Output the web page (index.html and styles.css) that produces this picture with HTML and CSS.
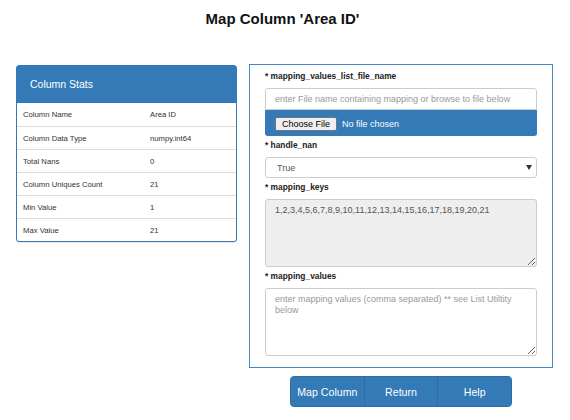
FILE: index.html
```html
<!DOCTYPE html>
<html>
<head>
<meta charset="utf-8">
<link rel="stylesheet" href="styles.css">
</head>
<body>
<h1 class="title">Map Column 'Area ID'</h1>
<div class="layout">
  <section class="stats">
    <div class="stats-head">Column Stats</div>
    <div class="stat-row"><span>Column Name</span><span>Area ID</span></div>
    <div class="stat-row"><span>Column Data Type</span><span>numpy.int64</span></div>
    <div class="stat-row"><span>Total Nans</span><span>0</span></div>
    <div class="stat-row"><span>Column Uniques Count</span><span>21</span></div>
    <div class="stat-row"><span>Min Value</span><span>1</span></div>
    <div class="stat-row"><span>Max Value</span><span>21</span></div>
  </section>
  <div class="right">
    <form class="form-panel">
      <label class="lbl">* mapping_values_list_file_name</label>
      <input class="text-input" type="text" placeholder="enter File name containing mapping or browse to file below">
      <div class="file-row"><span class="file-btn">Choose File</span><span class="file-none">No file chosen</span></div>
      <label class="lbl">* handle_nan</label>
      <div class="select"><span>True</span><svg class="caret" width="6" height="5" viewBox="0 0 6 5"><polygon points="0,0 6,0 3,5" fill="#333"/></svg></div>
      <label class="lbl">* mapping_keys</label>
      <textarea class="area area-ro" readonly>1,2,3,4,5,6,7,8,9,10,11,12,13,14,15,16,17,18,19,20,21</textarea>
      <label class="lbl">* mapping_values</label>
      <textarea class="area" placeholder="enter mapping values (comma separated) ** see List Utiltity below"></textarea>
    </form>
    <div class="actions">
      <button class="btn" type="button">Map Column</button>
      <button class="btn" type="button">Return</button>
      <button class="btn" type="button">Help</button>
    </div>
  </div>
</div>
</body>
</html>
```
FILE: styles.css
```css
* { box-sizing: border-box; }
body {
  margin: 0;
  background: #fff;
  font-family: "Liberation Sans", Arial, sans-serif;
  color: #333;
}
.title {
  margin: 0;
  padding: 10px 5px 0 0;
  font-size: 15px;
  line-height: 17px;
  font-weight: bold;
  color: #111;
  text-align: center;
}
.layout {
  display: flex;
  align-items: flex-start;
  gap: 12px;
  padding-left: 16px;
  margin-top: 37px;
}
.stats {
  width: 221px;
  margin-top: 1px;
  border: 1px solid #337ab7;
  border-radius: 3px;
  box-shadow: 0 1px 1px rgba(0,0,0,.1);
  background: #fff;
}
.stats-head {
  height: 37px;
  background: #337ab7;
  color: #fff;
  font-size: 10.5px;
  padding: 0 0 2px 13px;
  display: flex;
  align-items: center;
}
.stat-row {
  display: grid;
  grid-template-columns: 127px 1fr;
  align-items: center;
  height: 23px;
  padding-left: 6px;
  border-top: 1px solid #ddd;
  font-size: 7.7px;
  color: #333;
}
.stats-head + .stat-row { border-top: 0; }
.right {
  width: 304px;
  display: flex;
  flex-direction: column;
  align-items: center;
}
.form-panel {
  width: 100%;
  margin: 0;
  border: 1px solid #4a88c7;
  padding: 6px 15px 11px;
  display: flex;
  flex-direction: column;
}
.lbl {
  display: block;
  font-size: 8.4px;
  line-height: 11px;
  font-weight: bold;
  color: #222;
  margin: 0 0 6px;
}
.text-input {
  display: block;
  width: 100%;
  height: 22px;
  margin: 0;
  border: 1px solid #ccc;
  border-radius: 3px 3px 0 0;
  padding: 0 9px;
  font-family: inherit;
  font-size: 9px;
  color: #555;
}
.text-input::placeholder, .area::placeholder { color: #999; }
.file-row {
  height: 26px;
  background: #337ab7;
  border-radius: 0 0 3px 3px;
  display: flex;
  align-items: center;
  gap: 5px;
  padding: 1px 0 0 10px;
  margin-bottom: 4px;
}
.file-btn {
  height: 14px;
  padding: 0 6px;
  background: #efefef;
  border: 1px solid #767676;
  border-radius: 2px;
  font-size: 9px;
  line-height: 12px;
  color: #000;
}
.file-none {
  font-size: 9px;
  color: #fff;
}
.select {
  height: 21px;
  border: 1px solid #ccc;
  border-radius: 3px;
  padding: 0 4px 0 11px;
  display: flex;
  align-items: center;
  justify-content: space-between;
  font-size: 9px;
  color: #555;
  margin-bottom: 4px;
}
.caret { display: block; }
.area {
  display: block;
  width: 100%;
  height: 68px;
  margin: 0 0 4px;
  border: 1px solid #ccc;
  border-radius: 3px;
  padding: 5px 9px;
  font-family: inherit;
  font-size: 9px;
  line-height: 11px;
  color: #555;
  resize: vertical;
  background: #fff;
}
.area:last-child { margin-bottom: 0; }
.area-ro { background: #eee; }
.actions {
  display: flex;
  width: 222px;
  height: 31px;
  margin-top: 8px;
  border-radius: 4px;
  overflow: hidden;
  border: 1px solid #2e6da4;
  background: #337ab7;
}
.btn {
  flex: 1;
  margin: 0;
  border: 0;
  background: #337ab7;
  color: #fff;
  font-family: inherit;
  font-size: 10.6px;
  padding: 0;
}
.btn + .btn { border-left: 1px solid #2e6da4; }
```
